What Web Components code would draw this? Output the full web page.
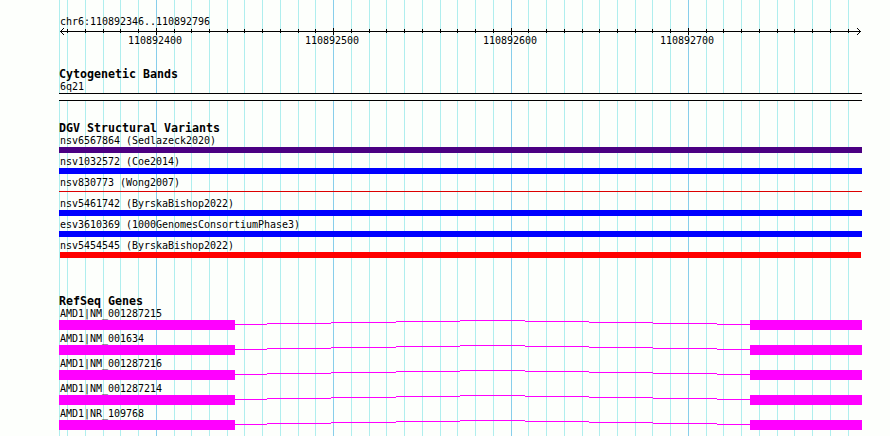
<!DOCTYPE html>
<html lang="en"><head><meta charset="utf-8"><title>Genome browser</title>
<style>html,body{margin:0;background:#fdfffc}body{width:890px;height:436px;overflow:hidden}</style></head>
<body><genome-view></genome-view>
<script>
const TEXT = "font:10px/12px 'DejaVu Sans Mono',monospace;letter-spacing:-.02px;color:#000;";
const NAME = "box-sizing:border-box;padding:1px 0 0 1px;height:13px;white-space:nowrap;";
const MAJOR = [156, 333, 511, 688];
const MINOR = [67,85,103,120,138,174,191,209,227,244,262,280,298,315,351,369,386,404,422,440,457,475,493,528,546,564,582,599,617,635,652,670,706,723,741,759,777,794,812,830,848];

class CoordinateRuler extends HTMLElement {
  connectedCallback() {
    const tick = (x, y, h) => `<rect x="${x - 59}" y="${y}" width="1" height="${h}"/>`;
    this.attachShadow({mode: 'open'}).innerHTML = `<style>
      :host{display:block;height:53px;${TEXT}}
      .range{${NAME}}
      svg{display:block}
      .labels{display:grid;grid-template-columns:69px 177px 178px 177px 60px}
      </style><div class="range"><slot></slot></div>
      <svg width="803" height="7" shape-rendering="crispEdges"><rect x="1" y="3" width="801" height="1"/>
      ${MINOR.map(x => tick(x, 1, 4)).join('')}${MAJOR.map(x => tick(x, 0, 7)).join('')}
      <path d="M4 0h1v1h-1zM3 1h1v1h-1zM2 2h1v1h-1zM2 4h1v1h-1zM3 5h1v1h-1zM4 6h1v1h-1zM798 0h1v1h-1zM799 1h1v1h-1zM800 2h1v1h-1zM800 4h1v1h-1zM799 5h1v1h-1zM798 6h1v1h-1z"/></svg>
      <div class="labels"><i></i><span>110892400</span><span>110892500</span><span>110892600</span><span>110892700</span></div>`;
  }
}
customElements.define('coordinate-ruler', CoordinateRuler);

class TrackGroup extends HTMLElement {
  connectedCallback() {
    this.attachShadow({mode: 'open'}).innerHTML = `<style>
      :host{display:block}
      h2{margin:0;font:bold 11.63px/13px 'DejaVu Sans Mono',monospace;height:12px;white-space:nowrap}
      </style><h2>${this.getAttribute('heading')}</h2><slot></slot>`;
  }
}
customElements.define('track-group', TrackGroup);

class CytoBand extends HTMLElement {
  connectedCallback() {
    this.attachShadow({mode: 'open'}).innerHTML = `<style>
      :host{display:block;${TEXT}} .name{${NAME}}
      .band{height:6px;border:solid #000;border-width:1px 0;background:#fdfffc}
      </style><div class="name"><slot></slot></div><div class="band"></div>`;
  }
}
customElements.define('cyto-band', CytoBand);

class VariantFeature extends HTMLElement {
  connectedCallback() {
    const thin = this.hasAttribute('thin'), inset = this.hasAttribute('inset') ? 1 : 0;
    this.attachShadow({mode: 'open'}).innerHTML = `<style>
      :host{display:flow-root;height:21px;${TEXT}} .name{${NAME}}
      .bar{height:${thin ? 1 : 6}px;margin:${thin ? 2 : 0}px ${inset}px 0;background:${this.getAttribute('color')}}
      </style><div class="name"><slot></slot></div><div class="bar"></div>`;
  }
}
customElements.define('variant-feature', VariantFeature);

class GeneModel extends HTMLElement {
  connectedCallback() {
    const steps = [[235,267,4],[267,331,3],[331,396,2],[396,460,1],[460,525,0],[525,589,1],[589,653,2],[653,717,3],[717,750,4]];
    this.attachShadow({mode: 'open'}).innerHTML = `<style>
      :host{display:block;height:25px;${TEXT}} .name{${NAME}}
      svg{display:block;fill:#f0f}
      </style><div class="name"><slot></slot></div>
      <svg width="803" height="10" shape-rendering="crispEdges"><rect width="176" height="10"/><rect x="691" width="112" height="10"/>
      ${steps.map(([a, b, y]) => `<rect x="${a - 59}" y="${y}" width="${b - a}" height="1"/>`).join('')}</svg>`;
  }
}
customElements.define('gene-model', GeneModel);

class GenomeView extends HTMLElement {
  connectedCallback() {
    const line = (x, c) => `linear-gradient(${c},${c}) ${x}px 0/1px 100% no-repeat`;
    const grid = [...MAJOR.map(x => line(x, '#87ceeb')), ...[59, ...MINOR].map(x => line(x, '#afeeee'))].join(',');
    this.attachShadow({mode: 'open'}).innerHTML = `<style>
      :host{display:block;box-sizing:border-box;width:890px;height:436px;overflow:hidden;padding:15px 28px 0 59px;background:${grid}}
      .dgv{margin-top:21px}.genes{margin-top:35px}
      </style>
      <coordinate-ruler>chr6:110892346..110892796</coordinate-ruler>
      <track-group heading="Cytogenetic Bands"><cyto-band>6q21</cyto-band></track-group>
      <track-group class="dgv" heading="DGV Structural Variants">
        <variant-feature color="#4b0082">nsv6567864 (Sedlazeck2020)</variant-feature>
        <variant-feature color="#00f">nsv1032572 (Coe2014)</variant-feature>
        <variant-feature color="#dc0000" thin>nsv830773 (Wong2007)</variant-feature>
        <variant-feature color="#00f">nsv5461742 (ByrskaBishop2022)</variant-feature>
        <variant-feature color="#00f">esv3610369 (1000GenomesConsortiumPhase3)</variant-feature>
        <variant-feature color="#f00" inset>nsv5454545 (ByrskaBishop2022)</variant-feature>
      </track-group>
      <track-group class="genes" heading="RefSeq Genes">
        <gene-model>AMD1|NM_001287215</gene-model><gene-model>AMD1|NM_001634</gene-model>
        <gene-model>AMD1|NM_001287216</gene-model><gene-model>AMD1|NM_001287214</gene-model>
        <gene-model>AMD1|NR_109768</gene-model>
      </track-group>`;
  }
}
customElements.define('genome-view', GenomeView);
</script></body></html>
